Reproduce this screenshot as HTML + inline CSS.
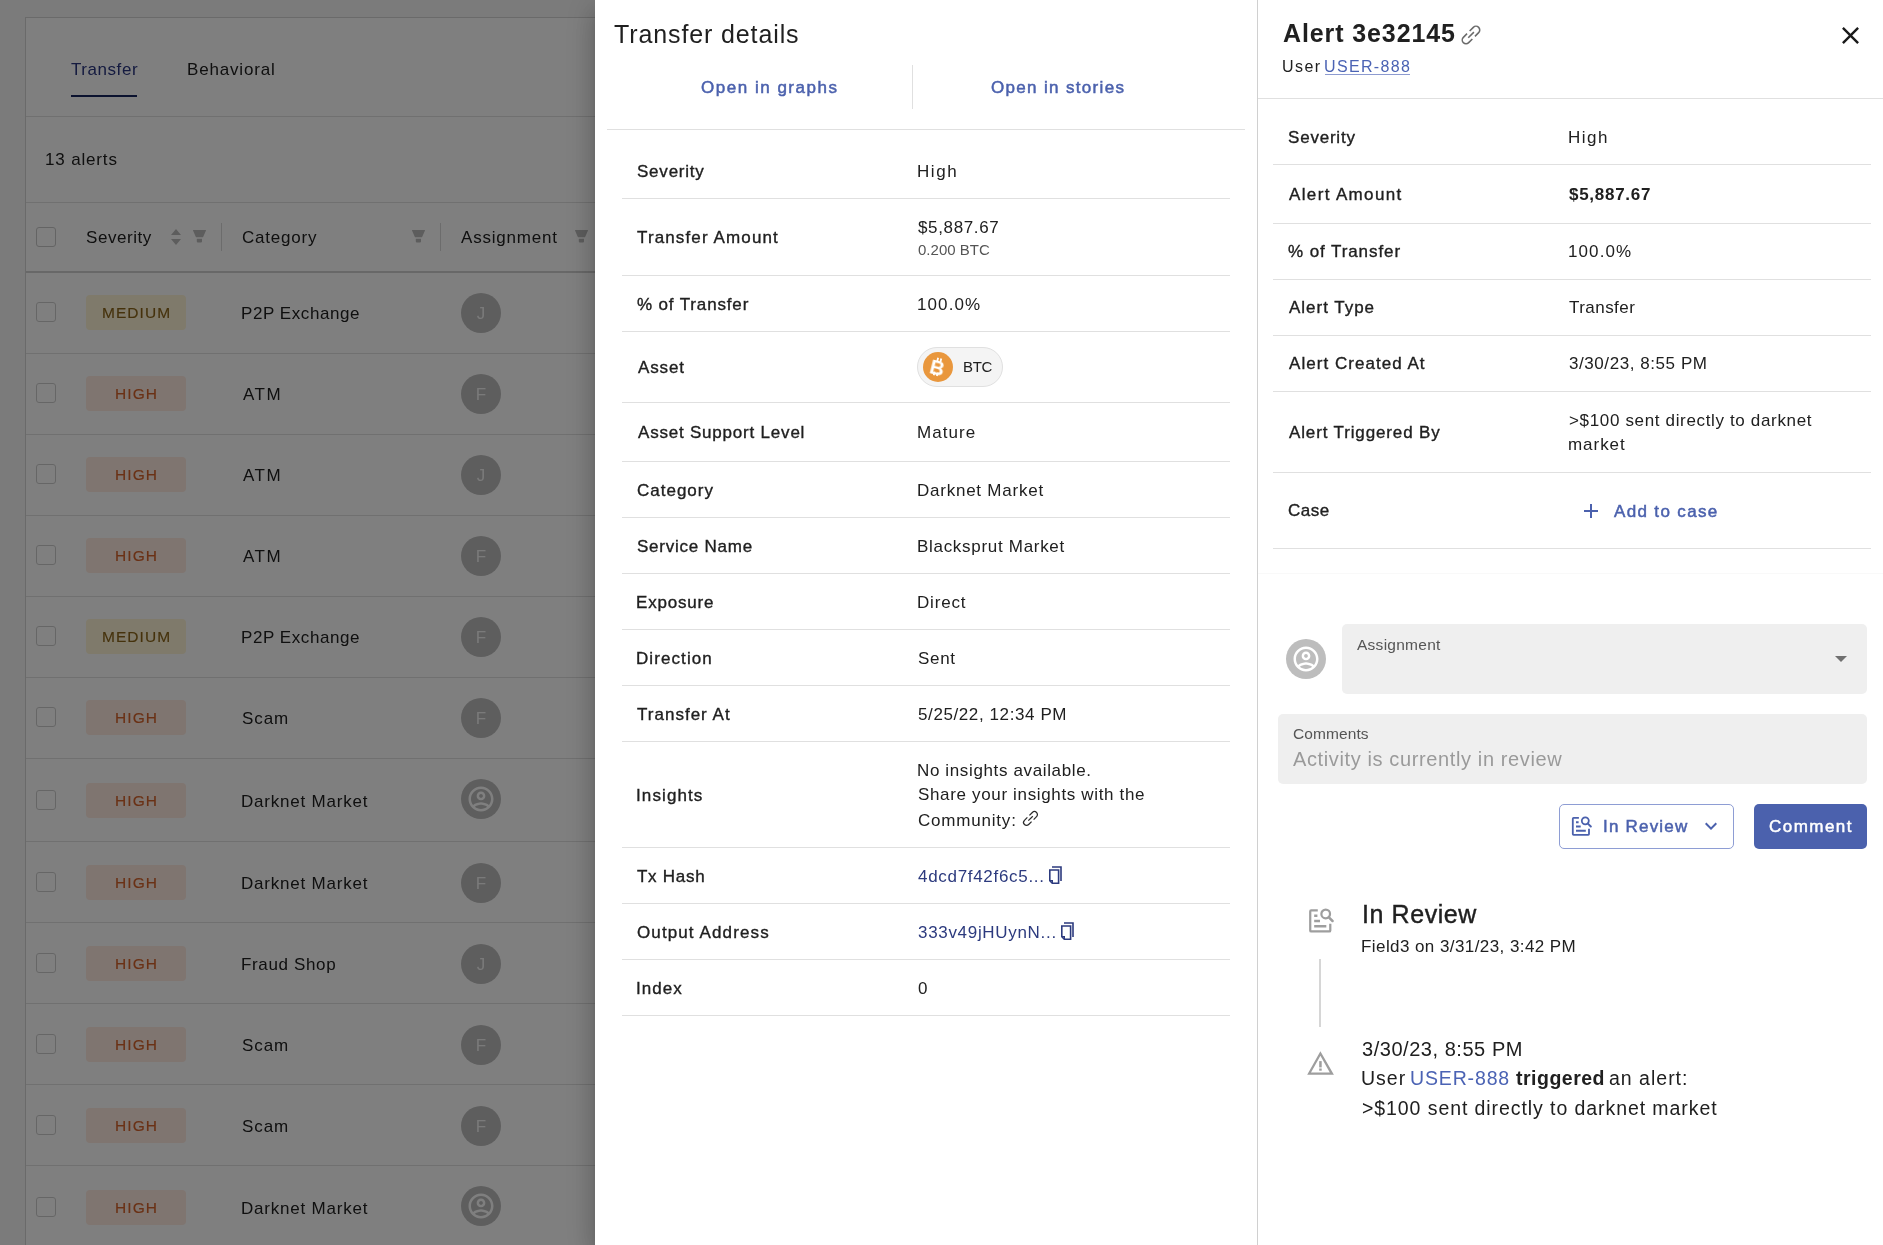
<!DOCTYPE html>
<html><head><meta charset="utf-8"><title>Alert</title>
<style>
*{box-sizing:border-box;margin:0;padding:0}
html,body{width:1883px;height:1245px;overflow:hidden;background:#fff;font-family:"Liberation Sans",sans-serif;color:#202020}
.a{position:absolute;display:block}
.t{position:absolute;white-space:nowrap;will-change:transform}
</style></head><body>
<div class="a" style="left:0px;top:0px;width:1883px;height:1245px;background:#f7f7f7"></div>
<div class="a" style="left:25px;top:17px;width:1858px;height:1240px;background:#fff;border-left:1px solid #d4d4d4;border-top:1px solid #d4d4d4"></div>
<div class="t" style="left:70.8px;top:60.61px;font-size:17px;line-height:17px;letter-spacing:0.557px;color:#2a3680;">Transfer</div>
<div class="a" style="left:71px;top:95px;width:66px;height:2px;background:#16245e"></div>
<div class="t" style="left:186.7px;top:60.61px;font-size:17px;line-height:17px;letter-spacing:0.833px;;">Behavioral</div>
<div class="a" style="left:26px;top:116px;width:1857px;height:1px;background:#e0e0e0"></div>
<div class="t" style="left:45.3px;top:151.11px;font-size:17px;line-height:17px;letter-spacing:0.838px;;">13 alerts</div>
<div class="a" style="left:26px;top:202px;width:1857px;height:1px;background:#e0e0e0"></div>
<div class="a" style="left:36px;top:227px;width:20px;height:20px;border:1.5px solid #c8c8c8;border-radius:3px;background:#fff"></div>
<div class="t" style="left:85.8px;top:228.71px;font-size:17px;line-height:17px;letter-spacing:0.557px;;">Severity</div>
<svg class="a" style="left:171px;top:229px;" width="10" height="16" viewBox="0 0 10 16"><path d="M5 0 L10 6 L0 6Z M0 10 L10 10 L5 16Z" fill="#bababa"/></svg>
<svg class="a" style="left:193px;top:230px;" width="13" height="13" viewBox="0 0 13 13"><path d="M0.3 0 H12.7 Q13.2 0 12.9 0.7 L10 7.2 H3 L0.1 0.7 Q-0.2 0 0.3 0Z M3.8 8.8 H9 V11.6 Q9 12.6 8 12.6 H4.8 Q3.8 12.6 3.8 11.6Z" fill="#bababa"/></svg>
<div class="a" style="left:221px;top:223px;width:1px;height:28px;background:#d8d8d8"></div>
<div class="t" style="left:242.1px;top:228.71px;font-size:17px;line-height:17px;letter-spacing:0.771px;;">Category</div>
<svg class="a" style="left:412px;top:230px;" width="13" height="13" viewBox="0 0 13 13"><path d="M0.3 0 H12.7 Q13.2 0 12.9 0.7 L10 7.2 H3 L0.1 0.7 Q-0.2 0 0.3 0Z M3.8 8.8 H9 V11.6 Q9 12.6 8 12.6 H4.8 Q3.8 12.6 3.8 11.6Z" fill="#bababa"/></svg>
<div class="a" style="left:440px;top:223px;width:1px;height:28px;background:#d8d8d8"></div>
<div class="t" style="left:461.4px;top:228.71px;font-size:17px;line-height:17px;letter-spacing:0.789px;;">Assignment</div>
<svg class="a" style="left:575px;top:230px;" width="13" height="13" viewBox="0 0 13 13"><path d="M0.3 0 H12.7 Q13.2 0 12.9 0.7 L10 7.2 H3 L0.1 0.7 Q-0.2 0 0.3 0Z M3.8 8.8 H9 V11.6 Q9 12.6 8 12.6 H4.8 Q3.8 12.6 3.8 11.6Z" fill="#bababa"/></svg>
<div class="a" style="left:26px;top:271px;width:1857px;height:2px;background:#d0d0d0"></div>
<div class="a" style="left:26px;top:353px;width:1857px;height:1px;background:#e0e0e0"></div>
<div class="a" style="left:26px;top:434px;width:1857px;height:1px;background:#e0e0e0"></div>
<div class="a" style="left:26px;top:515px;width:1857px;height:1px;background:#e0e0e0"></div>
<div class="a" style="left:26px;top:596px;width:1857px;height:1px;background:#e0e0e0"></div>
<div class="a" style="left:26px;top:677px;width:1857px;height:1px;background:#e0e0e0"></div>
<div class="a" style="left:26px;top:758px;width:1857px;height:1px;background:#e0e0e0"></div>
<div class="a" style="left:26px;top:841px;width:1857px;height:1px;background:#e0e0e0"></div>
<div class="a" style="left:26px;top:922px;width:1857px;height:1px;background:#e0e0e0"></div>
<div class="a" style="left:26px;top:1003px;width:1857px;height:1px;background:#e0e0e0"></div>
<div class="a" style="left:26px;top:1084px;width:1857px;height:1px;background:#e0e0e0"></div>
<div class="a" style="left:26px;top:1165px;width:1857px;height:1px;background:#e0e0e0"></div>
<div class="a" style="left:36px;top:302px;width:20px;height:20px;border:1.5px solid #cdcdcd;border-radius:3px;background:#fff"></div>
<div class="a" style="left:86px;top:295px;width:100px;height:35px;background:#fff4d6;border-radius:4px"></div>
<div class="t" style="left:101.78px;top:304.88px;font-size:15.5px;line-height:15.5px;letter-spacing:1.050px;color:#8a6418;-webkit-text-stroke:0.15px currentColor;">MEDIUM</div>
<div class="t" style="left:241.1px;top:304.61px;font-size:17px;line-height:17px;letter-spacing:0.573px;;">P2P Exchange</div>
<div class="a" style="left:461px;top:293px;width:40px;height:40px;background:#bdbdbd;border-radius:50%"></div>
<div class="t" style="left:461.2px;top:304.61px;font-size:17px;line-height:17px;width:40px;text-align:center;color:#f4f4f4">J</div>
<div class="a" style="left:36px;top:383px;width:20px;height:20px;border:1.5px solid #cdcdcd;border-radius:3px;background:#fff"></div>
<div class="a" style="left:86px;top:376px;width:100px;height:35px;background:#ffeae0;border-radius:4px"></div>
<div class="t" style="left:114.58px;top:385.88px;font-size:15.5px;line-height:15.5px;letter-spacing:1.083px;color:#d4622a;-webkit-text-stroke:0.15px currentColor;">HIGH</div>
<div class="t" style="left:242.5px;top:385.61px;font-size:17px;line-height:17px;letter-spacing:1.500px;;">ATM</div>
<div class="a" style="left:461px;top:374px;width:40px;height:40px;background:#bdbdbd;border-radius:50%"></div>
<div class="t" style="left:461.2px;top:385.61px;font-size:17px;line-height:17px;width:40px;text-align:center;color:#f4f4f4">F</div>
<div class="a" style="left:36px;top:464px;width:20px;height:20px;border:1.5px solid #cdcdcd;border-radius:3px;background:#fff"></div>
<div class="a" style="left:86px;top:457px;width:100px;height:35px;background:#ffeae0;border-radius:4px"></div>
<div class="t" style="left:114.58px;top:466.88px;font-size:15.5px;line-height:15.5px;letter-spacing:1.083px;color:#d4622a;-webkit-text-stroke:0.15px currentColor;">HIGH</div>
<div class="t" style="left:242.5px;top:466.61px;font-size:17px;line-height:17px;letter-spacing:1.500px;;">ATM</div>
<div class="a" style="left:461px;top:455px;width:40px;height:40px;background:#bdbdbd;border-radius:50%"></div>
<div class="t" style="left:461.2px;top:466.61px;font-size:17px;line-height:17px;width:40px;text-align:center;color:#f4f4f4">J</div>
<div class="a" style="left:36px;top:545px;width:20px;height:20px;border:1.5px solid #cdcdcd;border-radius:3px;background:#fff"></div>
<div class="a" style="left:86px;top:538px;width:100px;height:35px;background:#ffeae0;border-radius:4px"></div>
<div class="t" style="left:114.58px;top:547.88px;font-size:15.5px;line-height:15.5px;letter-spacing:1.083px;color:#d4622a;-webkit-text-stroke:0.15px currentColor;">HIGH</div>
<div class="t" style="left:242.5px;top:547.61px;font-size:17px;line-height:17px;letter-spacing:1.500px;;">ATM</div>
<div class="a" style="left:461px;top:536px;width:40px;height:40px;background:#bdbdbd;border-radius:50%"></div>
<div class="t" style="left:461.2px;top:547.61px;font-size:17px;line-height:17px;width:40px;text-align:center;color:#f4f4f4">F</div>
<div class="a" style="left:36px;top:626px;width:20px;height:20px;border:1.5px solid #cdcdcd;border-radius:3px;background:#fff"></div>
<div class="a" style="left:86px;top:619px;width:100px;height:35px;background:#fff4d6;border-radius:4px"></div>
<div class="t" style="left:101.78px;top:628.88px;font-size:15.5px;line-height:15.5px;letter-spacing:1.050px;color:#8a6418;-webkit-text-stroke:0.15px currentColor;">MEDIUM</div>
<div class="t" style="left:241.1px;top:628.61px;font-size:17px;line-height:17px;letter-spacing:0.573px;;">P2P Exchange</div>
<div class="a" style="left:461px;top:617px;width:40px;height:40px;background:#bdbdbd;border-radius:50%"></div>
<div class="t" style="left:461.2px;top:628.61px;font-size:17px;line-height:17px;width:40px;text-align:center;color:#f4f4f4">F</div>
<div class="a" style="left:36px;top:707px;width:20px;height:20px;border:1.5px solid #cdcdcd;border-radius:3px;background:#fff"></div>
<div class="a" style="left:86px;top:700px;width:100px;height:35px;background:#ffeae0;border-radius:4px"></div>
<div class="t" style="left:114.58px;top:709.88px;font-size:15.5px;line-height:15.5px;letter-spacing:1.083px;color:#d4622a;-webkit-text-stroke:0.15px currentColor;">HIGH</div>
<div class="t" style="left:241.7px;top:709.61px;font-size:17px;line-height:17px;letter-spacing:0.933px;;">Scam</div>
<div class="a" style="left:461px;top:698px;width:40px;height:40px;background:#bdbdbd;border-radius:50%"></div>
<div class="t" style="left:461.2px;top:709.61px;font-size:17px;line-height:17px;width:40px;text-align:center;color:#f4f4f4">F</div>
<div class="a" style="left:36px;top:790px;width:20px;height:20px;border:1.5px solid #cdcdcd;border-radius:3px;background:#fff"></div>
<div class="a" style="left:86px;top:783px;width:100px;height:35px;background:#ffeae0;border-radius:4px"></div>
<div class="t" style="left:114.58px;top:792.88px;font-size:15.5px;line-height:15.5px;letter-spacing:1.083px;color:#d4622a;-webkit-text-stroke:0.15px currentColor;">HIGH</div>
<div class="t" style="left:241.1px;top:792.61px;font-size:17px;line-height:17px;letter-spacing:0.792px;;">Darknet Market</div>
<div class="a" style="left:461px;top:779px;width:40px;height:40px;background:#bdbdbd;border-radius:50%"></div>
<svg class="a" style="left:466px;top:784px;" width="30" height="30" viewBox="0 0 24 24"><path fill="#fff" d="M12 2C6.48 2 2 6.48 2 12s4.48 10 10 10 10-4.48 10-10S17.52 2 12 2zM7.07 18.28c.43-.9 3.05-1.78 4.930-1.78s4.51.88 4.93 1.78C15.57 19.36 13.86 20 12 20s-3.57-.64-4.93-1.720zm11.29-1.45c-1.43-1.74-4.9-2.33-6.36-2.33s-4.93.59-6.36 2.33C4.62 15.49 4 13.82 4 12c0-4.41 3.59-8 8-8s8 3.590 8 8c0 1.82-.62 3.49-1.64 4.83zM12 6c-1.94 0-3.5 1.56-3.5 3.5S10.06 13 12 13s3.5-1.56 3.5-3.5S13.94 6 12 6zm0 5c-.83 0-1.5-.67-1.5-1.5S11.17 8 12 8s1.5.67 1.5 1.5S12.83 11 12 11z"/></svg>
<div class="a" style="left:36px;top:872px;width:20px;height:20px;border:1.5px solid #cdcdcd;border-radius:3px;background:#fff"></div>
<div class="a" style="left:86px;top:865px;width:100px;height:35px;background:#ffeae0;border-radius:4px"></div>
<div class="t" style="left:114.58px;top:874.88px;font-size:15.5px;line-height:15.5px;letter-spacing:1.083px;color:#d4622a;-webkit-text-stroke:0.15px currentColor;">HIGH</div>
<div class="t" style="left:241.1px;top:874.61px;font-size:17px;line-height:17px;letter-spacing:0.792px;;">Darknet Market</div>
<div class="a" style="left:461px;top:863px;width:40px;height:40px;background:#bdbdbd;border-radius:50%"></div>
<div class="t" style="left:461.2px;top:874.61px;font-size:17px;line-height:17px;width:40px;text-align:center;color:#f4f4f4">F</div>
<div class="a" style="left:36px;top:953px;width:20px;height:20px;border:1.5px solid #cdcdcd;border-radius:3px;background:#fff"></div>
<div class="a" style="left:86px;top:946px;width:100px;height:35px;background:#ffeae0;border-radius:4px"></div>
<div class="t" style="left:114.58px;top:955.88px;font-size:15.5px;line-height:15.5px;letter-spacing:1.083px;color:#d4622a;-webkit-text-stroke:0.15px currentColor;">HIGH</div>
<div class="t" style="left:241.1px;top:955.61px;font-size:17px;line-height:17px;letter-spacing:0.644px;;">Fraud Shop</div>
<div class="a" style="left:461px;top:944px;width:40px;height:40px;background:#bdbdbd;border-radius:50%"></div>
<div class="t" style="left:461.2px;top:955.61px;font-size:17px;line-height:17px;width:40px;text-align:center;color:#f4f4f4">J</div>
<div class="a" style="left:36px;top:1034px;width:20px;height:20px;border:1.5px solid #cdcdcd;border-radius:3px;background:#fff"></div>
<div class="a" style="left:86px;top:1027px;width:100px;height:35px;background:#ffeae0;border-radius:4px"></div>
<div class="t" style="left:114.58px;top:1036.88px;font-size:15.5px;line-height:15.5px;letter-spacing:1.083px;color:#d4622a;-webkit-text-stroke:0.15px currentColor;">HIGH</div>
<div class="t" style="left:241.7px;top:1036.61px;font-size:17px;line-height:17px;letter-spacing:0.933px;;">Scam</div>
<div class="a" style="left:461px;top:1025px;width:40px;height:40px;background:#bdbdbd;border-radius:50%"></div>
<div class="t" style="left:461.2px;top:1036.61px;font-size:17px;line-height:17px;width:40px;text-align:center;color:#f4f4f4">F</div>
<div class="a" style="left:36px;top:1115px;width:20px;height:20px;border:1.5px solid #cdcdcd;border-radius:3px;background:#fff"></div>
<div class="a" style="left:86px;top:1108px;width:100px;height:35px;background:#ffeae0;border-radius:4px"></div>
<div class="t" style="left:114.58px;top:1117.88px;font-size:15.5px;line-height:15.5px;letter-spacing:1.083px;color:#d4622a;-webkit-text-stroke:0.15px currentColor;">HIGH</div>
<div class="t" style="left:241.7px;top:1117.61px;font-size:17px;line-height:17px;letter-spacing:0.933px;;">Scam</div>
<div class="a" style="left:461px;top:1106px;width:40px;height:40px;background:#bdbdbd;border-radius:50%"></div>
<div class="t" style="left:461.2px;top:1117.61px;font-size:17px;line-height:17px;width:40px;text-align:center;color:#f4f4f4">F</div>
<div class="a" style="left:36px;top:1197px;width:20px;height:20px;border:1.5px solid #cdcdcd;border-radius:3px;background:#fff"></div>
<div class="a" style="left:86px;top:1190px;width:100px;height:35px;background:#ffeae0;border-radius:4px"></div>
<div class="t" style="left:114.58px;top:1199.88px;font-size:15.5px;line-height:15.5px;letter-spacing:1.083px;color:#d4622a;-webkit-text-stroke:0.15px currentColor;">HIGH</div>
<div class="t" style="left:241.1px;top:1199.61px;font-size:17px;line-height:17px;letter-spacing:0.792px;;">Darknet Market</div>
<div class="a" style="left:461px;top:1186px;width:40px;height:40px;background:#bdbdbd;border-radius:50%"></div>
<svg class="a" style="left:466px;top:1191px;" width="30" height="30" viewBox="0 0 24 24"><path fill="#fff" d="M12 2C6.48 2 2 6.48 2 12s4.48 10 10 10 10-4.48 10-10S17.52 2 12 2zM7.07 18.28c.43-.9 3.05-1.78 4.930-1.78s4.51.88 4.93 1.78C15.57 19.36 13.86 20 12 20s-3.57-.64-4.93-1.720zm11.29-1.45c-1.43-1.74-4.9-2.33-6.36-2.33s-4.93.59-6.36 2.33C4.62 15.49 4 13.82 4 12c0-4.41 3.59-8 8-8s8 3.590 8 8c0 1.82-.62 3.49-1.64 4.83zM12 6c-1.94 0-3.5 1.56-3.5 3.5S10.06 13 12 13s3.5-1.56 3.5-3.5S13.94 6 12 6zm0 5c-.83 0-1.5-.67-1.5-1.5S11.17 8 12 8s1.5.67 1.5 1.5S12.83 11 12 11z"/></svg>
<div class="a" style="left:0px;top:0px;width:1883px;height:1245px;background:rgba(0,0,0,0.5)"></div>
<div class="a" style="left:595px;top:0px;width:662px;height:1245px;background:#fff;box-shadow:0px 8px 10px -5px rgba(0,0,0,0.2),0px 16px 24px 2px rgba(0,0,0,0.14),0px 6px 30px 5px rgba(0,0,0,0.12)"></div>
<div class="t" style="left:614.3px;top:21.94px;font-size:25px;line-height:25px;letter-spacing:0.880px;color:#202020;">Transfer details</div>
<div class="t" style="left:701.35px;top:78.61px;font-size:17px;line-height:17px;letter-spacing:1.515px;color:#4b61ad;-webkit-text-stroke:0.5px currentColor;">Open in graphs</div>
<div class="a" style="left:912px;top:65px;width:1px;height:44px;background:#e0e0e0"></div>
<div class="t" style="left:991.15px;top:78.61px;font-size:17px;line-height:17px;letter-spacing:1.329px;color:#4b61ad;-webkit-text-stroke:0.5px currentColor;">Open in stories</div>
<div class="a" style="left:607px;top:129px;width:638px;height:1px;background:#e0e0e0"></div>
<div class="a" style="left:622px;top:198px;width:608px;height:1px;background:#e0e0e0"></div>
<div class="t" style="left:636.78px;top:162.81px;font-size:17px;line-height:17px;letter-spacing:0.779px;color:#202020;-webkit-text-stroke:0.35px currentColor;">Severity</div>
<div class="a" style="left:622px;top:275px;width:608px;height:1px;background:#e0e0e0"></div>
<div class="t" style="left:637.17px;top:228.81px;font-size:17px;line-height:17px;letter-spacing:1.125px;color:#202020;-webkit-text-stroke:0.35px currentColor;">Transfer Amount</div>
<div class="a" style="left:622px;top:331px;width:608px;height:1px;background:#e0e0e0"></div>
<div class="t" style="left:636.97px;top:295.81px;font-size:17px;line-height:17px;letter-spacing:0.854px;color:#202020;-webkit-text-stroke:0.35px currentColor;">% of Transfer</div>
<div class="a" style="left:622px;top:402px;width:608px;height:1px;background:#e0e0e0"></div>
<div class="t" style="left:637.57px;top:359.41px;font-size:17px;line-height:17px;letter-spacing:0.887px;color:#202020;-webkit-text-stroke:0.35px currentColor;">Asset</div>
<div class="a" style="left:622px;top:461px;width:608px;height:1px;background:#e0e0e0"></div>
<div class="t" style="left:637.57px;top:423.81px;font-size:17px;line-height:17px;letter-spacing:0.792px;color:#202020;-webkit-text-stroke:0.35px currentColor;">Asset Support Level</div>
<div class="a" style="left:622px;top:517px;width:608px;height:1px;background:#e0e0e0"></div>
<div class="t" style="left:636.78px;top:481.81px;font-size:17px;line-height:17px;letter-spacing:0.993px;color:#202020;-webkit-text-stroke:0.35px currentColor;">Category</div>
<div class="a" style="left:622px;top:573px;width:608px;height:1px;background:#e0e0e0"></div>
<div class="t" style="left:636.78px;top:537.81px;font-size:17px;line-height:17px;letter-spacing:0.768px;color:#202020;-webkit-text-stroke:0.35px currentColor;">Service Name</div>
<div class="a" style="left:622px;top:629px;width:608px;height:1px;background:#e0e0e0"></div>
<div class="t" style="left:636.17px;top:593.81px;font-size:17px;line-height:17px;letter-spacing:0.807px;color:#202020;-webkit-text-stroke:0.35px currentColor;">Exposure</div>
<div class="a" style="left:622px;top:685px;width:608px;height:1px;background:#e0e0e0"></div>
<div class="t" style="left:636.17px;top:649.81px;font-size:17px;line-height:17px;letter-spacing:1.081px;color:#202020;-webkit-text-stroke:0.35px currentColor;">Direction</div>
<div class="a" style="left:622px;top:741px;width:608px;height:1px;background:#e0e0e0"></div>
<div class="t" style="left:637.17px;top:705.81px;font-size:17px;line-height:17px;letter-spacing:1.015px;color:#202020;-webkit-text-stroke:0.35px currentColor;">Transfer At</div>
<div class="a" style="left:622px;top:847px;width:608px;height:1px;background:#e0e0e0"></div>
<div class="t" style="left:636.07px;top:786.81px;font-size:17px;line-height:17px;letter-spacing:1.107px;color:#202020;-webkit-text-stroke:0.35px currentColor;">Insights</div>
<div class="a" style="left:622px;top:903px;width:608px;height:1px;background:#e0e0e0"></div>
<div class="t" style="left:637.17px;top:867.81px;font-size:17px;line-height:17px;letter-spacing:0.725px;color:#202020;-webkit-text-stroke:0.35px currentColor;">Tx Hash</div>
<div class="a" style="left:622px;top:959px;width:608px;height:1px;background:#e0e0e0"></div>
<div class="t" style="left:636.78px;top:923.81px;font-size:17px;line-height:17px;letter-spacing:1.112px;color:#202020;-webkit-text-stroke:0.35px currentColor;">Output Address</div>
<div class="a" style="left:622px;top:1015px;width:608px;height:1px;background:#e0e0e0"></div>
<div class="t" style="left:636.07px;top:979.81px;font-size:17px;line-height:17px;letter-spacing:1.012px;color:#202020;-webkit-text-stroke:0.35px currentColor;">Index</div>
<div class="t" style="left:917.0px;top:162.81px;font-size:17px;line-height:17px;letter-spacing:1.567px;color:#202020;;">High</div>
<div class="t" style="left:918.2px;top:218.61px;font-size:17px;line-height:17px;letter-spacing:0.638px;color:#202020;">$5,887.67</div>
<div class="t" style="left:917.6px;top:242.10px;font-size:15px;line-height:15px;letter-spacing:0.012px;color:#555;">0.200 BTC</div>
<div class="t" style="left:917.1px;top:295.81px;font-size:17px;line-height:17px;letter-spacing:1.100px;color:#202020;;">100.0%</div>
<div class="a" style="left:917px;top:347px;width:86px;height:40px;background:#f4f4f4;border:1px solid #e0e0e0;border-radius:20px"></div>
<div class="a" style="left:923px;top:352px;width:30px;height:30px;background:#e9973d;border-radius:50%"></div>
<svg class="a" style="left:923px;top:352px;" width="30" height="30" viewBox="0 0 30 30"><g transform="rotate(14 15 15)" fill="#fff"><rect x="12" y="6" width="1.8" height="3.5"/><rect x="15.2" y="6" width="1.8" height="3.5"/><rect x="12" y="20.5" width="1.8" height="3.5"/><rect x="15.2" y="20.5" width="1.8" height="3.5"/></g></svg>
<div class="t" style="left:930px;top:357.57px;font-size:20px;line-height:20px;color:#fff;font-weight:bold;transform:rotate(14deg);transform-origin:8px 10px">B</div>
<div class="t" style="left:962.7px;top:359.20px;font-size:15px;line-height:15px;letter-spacing:-0.350px;color:#202020;">BTC</div>
<div class="t" style="left:917.0px;top:423.81px;font-size:17px;line-height:17px;letter-spacing:1.040px;color:#202020;;">Mature</div>
<div class="t" style="left:917.0px;top:481.81px;font-size:17px;line-height:17px;letter-spacing:0.762px;color:#202020;;">Darknet Market</div>
<div class="t" style="left:917.0px;top:537.81px;font-size:17px;line-height:17px;letter-spacing:0.700px;color:#202020;;">Blacksprut Market</div>
<div class="t" style="left:917.0px;top:593.81px;font-size:17px;line-height:17px;letter-spacing:0.820px;color:#202020;;">Direct</div>
<div class="t" style="left:917.6px;top:649.81px;font-size:17px;line-height:17px;letter-spacing:0.667px;color:#202020;;">Sent</div>
<div class="t" style="left:917.7px;top:705.81px;font-size:17px;line-height:17px;letter-spacing:0.600px;color:#202020;;">5/25/22, 12:34 PM</div>
<div class="t" style="left:917.0px;top:761.71px;font-size:17px;line-height:17px;letter-spacing:0.633px;color:#202020;">No insights available.</div>
<div class="t" style="left:917.6px;top:786.21px;font-size:17px;line-height:17px;letter-spacing:0.656px;color:#202020;">Share your insights with the</div>
<div class="t" style="left:917.6px;top:811.51px;font-size:17px;line-height:17px;letter-spacing:0.800px;color:#202020;">Community:</div>
<div class="t" style="left:918.0px;top:867.81px;font-size:17px;line-height:17px;letter-spacing:0.693px;color:#202020;color:#2c3a7e;">4dcd7f42f6c5...</div>
<div class="t" style="left:917.8px;top:923.81px;font-size:17px;line-height:17px;letter-spacing:0.686px;color:#202020;color:#2c3a7e;">333v49jHUynN...</div>
<div class="t" style="left:917.8px;top:979.81px;font-size:17px;line-height:17px;letter-spacing:0.000px;color:#202020;;">0</div>
<svg class="a" style="left:1048px;top:866px;" width="14" height="18" viewBox="0 0 14 18"><g fill="none" stroke="#2c3a7e" stroke-width="1.6"><path d="M4 1 H13 V15"/><path d="M2 4 H10.6 V17.4 H4.5 L1.8 14.7 V4Z"/><path d="M2 14.6 H4.4 V17" stroke-width="1.2"/></g></svg>
<svg class="a" style="left:1060px;top:921.5px;" width="14" height="18" viewBox="0 0 14 18"><g fill="none" stroke="#2c3a7e" stroke-width="1.6"><path d="M4 1 H13 V15"/><path d="M2 4 H10.6 V17.4 H4.5 L1.8 14.7 V4Z"/><path d="M2 14.6 H4.4 V17" stroke-width="1.2"/></g></svg>
<svg class="a" style="left:1021.1px;top:809px;" width="19" height="19" viewBox="0 0 24 24"><g fill="none" stroke="#2a2a2a" stroke-width="1.55" transform="rotate(-45 12 12)"><path d="M13.84 8.25 H19.05 A3.75 3.75 0 0 1 19.05 15.75 H13.84"/><path d="M10.16 15.75 H4.95 A3.75 3.75 0 0 1 4.95 8.25 H10.16"/><path d="M8.1 12 H16.1"/></g></svg>
<div class="a" style="left:1257px;top:0px;width:626px;height:1245px;background:#fff;border-left:1px solid #d0d0d0"></div>
<div class="t" style="left:1282.6px;top:20.64px;font-size:25px;line-height:25px;letter-spacing:0.892px;font-weight:bold;color:#202020;">Alert 3e32145</div>
<svg class="a" style="left:1459.4px;top:23.1px;" width="24" height="24" viewBox="0 0 24 24"><g fill="none" stroke="#6b6b6b" stroke-width="1.55" transform="rotate(-45 12 12)"><path d="M13.84 8.25 H19.05 A3.75 3.75 0 0 1 19.05 15.75 H13.84"/><path d="M10.16 15.75 H4.95 A3.75 3.75 0 0 1 4.95 8.25 H10.16"/><path d="M8.1 12 H16.1"/></g></svg>
<svg class="a" style="left:1836px;top:21px;" width="29" height="29" viewBox="0 0 24 24"><path fill="#1a1a1a" d="M19 6.41L17.59 5 12 10.59 6.41 5 5 6.41 10.59 12 5 17.59 6.41 19 12 13.41 17.59 19 19 17.59 13.41 12z"/></svg>
<div class="t" style="left:1282.1px;top:58.96px;font-size:16px;line-height:16px;letter-spacing:1.433px;color:#202020;">User</div>
<div class="t" style="left:1324.3px;top:58.96px;font-size:16px;line-height:16px;letter-spacing:1.343px;color:#4b63b4;">USER-888</div>
<div class="a" style="left:1325px;top:73.5px;width:85px;height:1px;background:#8d9bd0"></div>
<div class="a" style="left:1258px;top:98px;width:625px;height:1px;background:#e0e0e0"></div>
<div class="a" style="left:1273px;top:164px;width:598px;height:1px;background:#e0e0e0"></div>
<div class="t" style="left:1287.88px;top:129.11px;font-size:17px;line-height:17px;letter-spacing:0.793px;color:#202020;-webkit-text-stroke:0.35px currentColor;">Severity</div>
<div class="a" style="left:1273px;top:223px;width:598px;height:1px;background:#e0e0e0"></div>
<div class="t" style="left:1288.68px;top:185.61px;font-size:17px;line-height:17px;letter-spacing:1.359px;color:#202020;-webkit-text-stroke:0.35px currentColor;">Alert Amount</div>
<div class="a" style="left:1273px;top:279px;width:598px;height:1px;background:#e0e0e0"></div>
<div class="t" style="left:1288.08px;top:243.11px;font-size:17px;line-height:17px;letter-spacing:0.912px;color:#202020;-webkit-text-stroke:0.35px currentColor;">% of Transfer</div>
<div class="a" style="left:1273px;top:335px;width:598px;height:1px;background:#e0e0e0"></div>
<div class="t" style="left:1288.68px;top:299.11px;font-size:17px;line-height:17px;letter-spacing:0.983px;color:#202020;-webkit-text-stroke:0.35px currentColor;">Alert Type</div>
<div class="a" style="left:1273px;top:391px;width:598px;height:1px;background:#e0e0e0"></div>
<div class="t" style="left:1288.68px;top:355.11px;font-size:17px;line-height:17px;letter-spacing:1.037px;color:#202020;-webkit-text-stroke:0.35px currentColor;">Alert Created At</div>
<div class="a" style="left:1273px;top:472px;width:598px;height:1px;background:#e0e0e0"></div>
<div class="t" style="left:1288.68px;top:423.61px;font-size:17px;line-height:17px;letter-spacing:0.868px;color:#202020;-webkit-text-stroke:0.35px currentColor;">Alert Triggered By</div>
<div class="a" style="left:1273px;top:548px;width:598px;height:1px;background:#e0e0e0"></div>
<div class="t" style="left:1287.88px;top:502.11px;font-size:17px;line-height:17px;letter-spacing:0.517px;color:#202020;-webkit-text-stroke:0.35px currentColor;">Case</div>
<div class="t" style="left:1568.1px;top:129.11px;font-size:17px;line-height:17px;letter-spacing:1.533px;color:#202020;;">High</div>
<div class="t" style="left:1569.3px;top:185.61px;font-size:17px;line-height:17px;letter-spacing:0.725px;font-weight:bold;color:#202020;;">$5,887.67</div>
<div class="t" style="left:1568.2px;top:243.11px;font-size:17px;line-height:17px;letter-spacing:1.100px;color:#202020;;">100.0%</div>
<div class="t" style="left:1569.1px;top:299.11px;font-size:17px;line-height:17px;letter-spacing:0.457px;color:#202020;;">Transfer</div>
<div class="t" style="left:1568.9px;top:355.11px;font-size:17px;line-height:17px;letter-spacing:0.567px;color:#202020;;">3/30/23, 8:55 PM</div>
<div class="t" style="left:1568.7px;top:411.81px;font-size:17px;line-height:17px;letter-spacing:0.655px;color:#202020;">&gt;$100 sent directly to darknet</div>
<div class="t" style="left:1568.4px;top:436.21px;font-size:17px;line-height:17px;letter-spacing:0.960px;color:#202020;">market</div>
<svg class="a" style="left:1578.5px;top:498.5px;width:24px;height:24px" width="24" height="24" viewBox="0 0 24 24"><path fill="#4b61ad" d="M19 13h-6v6h-2v-6H5v-2h6V5h2v6h6v2z"/></svg>
<div class="t" style="left:1613.85px;top:502.81px;font-size:17px;line-height:17px;letter-spacing:1.350px;color:#4b61ad;-webkit-text-stroke:0.5px currentColor;">Add to case</div>
<div class="a" style="left:1258px;top:573px;width:625px;height:1px;background:#f9f9f9;border-top-left-radius:4px"></div>
<div class="a" style="left:1286px;top:639px;width:40px;height:40px;background:#bdbdbd;border-radius:50%"></div>
<svg class="a" style="left:1291px;top:644px;" width="30" height="30" viewBox="0 0 24 24"><path fill="#fff" d="M12 2C6.48 2 2 6.48 2 12s4.48 10 10 10 10-4.48 10-10S17.52 2 12 2zM7.07 18.28c.43-.9 3.05-1.78 4.930-1.78s4.51.88 4.93 1.78C15.57 19.36 13.86 20 12 20s-3.57-.64-4.93-1.720zm11.29-1.45c-1.43-1.74-4.9-2.33-6.36-2.33s-4.93.59-6.36 2.33C4.62 15.49 4 13.82 4 12c0-4.41 3.59-8 8-8s8 3.590 8 8c0 1.82-.62 3.49-1.64 4.83zM12 6c-1.94 0-3.5 1.56-3.5 3.5S10.06 13 12 13s3.5-1.56 3.5-3.5S13.94 6 12 6zm0 5c-.83 0-1.5-.67-1.5-1.5S11.17 8 12 8s1.5.67 1.5 1.5S12.83 11 12 11z"/></svg>
<div class="a" style="left:1342px;top:624px;width:525px;height:70px;background:#efefef;border-radius:5px"></div>
<div class="t" style="left:1357.4px;top:636.68px;font-size:15.5px;line-height:15.5px;letter-spacing:0.267px;color:#555;">Assignment</div>
<svg class="a" style="left:1835px;top:656px;" width="12" height="6" viewBox="0 0 12 6"><path d="M0 0H12L6 6Z" fill="#707070"/></svg>
<div class="a" style="left:1278px;top:714px;width:589px;height:70px;background:#efefef;border-radius:5px"></div>
<div class="t" style="left:1292.6px;top:725.88px;font-size:15.5px;line-height:15.5px;letter-spacing:0.086px;color:#555;">Comments</div>
<div class="t" style="left:1293.4px;top:748.97px;font-size:20px;line-height:20px;letter-spacing:0.623px;color:#9a9a9a;">Activity is currently in review</div>
<div class="a" style="left:1559px;top:804px;width:175px;height:45px;border:1px solid #8e9dd4;border-radius:5px;background:#fff"></div>
<svg class="a" style="left:1571px;top:816px;" width="21" height="21" viewBox="0 0 21 21"><g fill="none" stroke="#4b61ad" stroke-width="1.8" stroke-linecap="butt"><path d="M7.9 1.95 H2.6 Q1.8 1.95 1.8 2.8 V18.1 Q1.8 18.95 2.6 18.95 H17.2 Q18 18.95 18 18.1 V12.8"/><path d="M5 6.35 H7.6 M5 10.45 H9.7 M5 14.7 H14.8" stroke-width="2"/><circle cx="14.3" cy="4.8" r="3.5"/><path d="M16.9 7.6 L19.8 10.5" stroke-width="2" stroke-linecap="round"/></g></svg>
<div class="t" style="left:1603.05px;top:818.31px;font-size:17px;line-height:17px;letter-spacing:1.200px;color:#4b61ad;-webkit-text-stroke:0.5px currentColor;">In Review</div>
<svg class="a" style="left:1699px;top:814px;" width="24" height="24" viewBox="0 0 24 24"><path fill="#4b61ad" d="M16.59 8.59L12 13.17 7.41 8.59 6 10l6 6 6-6z"/></svg>
<div class="a" style="left:1754px;top:804px;width:113px;height:45px;background:#4b61ad;border-radius:5px"></div>
<div class="t" style="left:1768.95px;top:818.31px;font-size:17px;line-height:17px;letter-spacing:1.467px;color:#fff;-webkit-text-stroke:0.5px currentColor;">Comment</div>
<svg class="a" style="left:1308px;top:908px;" width="26" height="26" viewBox="0 0 21 21"><g fill="none" stroke="#9e9e9e" stroke-width="1.8" stroke-linecap="butt"><path d="M7.9 1.95 H2.6 Q1.8 1.95 1.8 2.8 V18.1 Q1.8 18.95 2.6 18.95 H17.2 Q18 18.95 18 18.1 V12.8"/><path d="M5 6.35 H7.6 M5 10.45 H9.7 M5 14.7 H14.8" stroke-width="2"/><circle cx="14.3" cy="4.8" r="3.5"/><path d="M16.9 7.6 L19.8 10.5" stroke-width="2" stroke-linecap="round"/></g></svg>
<div class="t" style="left:1361.9px;top:901.84px;font-size:25px;line-height:25px;letter-spacing:0.575px;color:#202020;-webkit-text-stroke:0.4px currentColor;">In Review</div>
<div class="t" style="left:1361.1px;top:938.31px;font-size:17px;line-height:17px;letter-spacing:0.424px;color:#202020;">Field3 on 3/31/23, 3:42 PM</div>
<div class="a" style="left:1319px;top:959px;width:2px;height:68px;background:#d6d6d6"></div>
<svg class="a" style="left:1306px;top:1048px;" width="30" height="30" viewBox="0 0 30 30"><path fill="#9e9e9e" fill-rule="evenodd" d="M14.4 3.2 L27.9 26.7 H1.2 Z M14.4 7.86 L5 24.4 H23.8 Z"/><rect x="13.2" y="13.1" width="2.5" height="6.3" fill="#9e9e9e"/><rect x="13.2" y="20.5" width="2.5" height="2.2" fill="#9e9e9e"/></svg>
<div class="t" style="left:1361.8px;top:1039.07px;font-size:20px;line-height:20px;letter-spacing:0.540px;color:#202020;">3/30/23, 8:55 PM</div>
<div class="t" style="left:1361.0px;top:1069.49px;font-size:19.5px;line-height:19.5px;letter-spacing:1.000px;color:#202020;">User</div>
<div class="t" style="left:1409.8px;top:1069.49px;font-size:19.5px;line-height:19.5px;letter-spacing:0.857px;color:#4b63b4;">USER-888</div>
<div class="t" style="left:1515.7px;top:1069.49px;font-size:19.5px;line-height:19.5px;letter-spacing:0.500px;font-weight:bold;color:#202020;">triggered</div>
<div class="t" style="left:1609.4px;top:1069.49px;font-size:19.5px;line-height:19.5px;letter-spacing:1.000px;color:#202020;">an alert:</div>
<div class="t" style="left:1361.6px;top:1099.49px;font-size:19.5px;line-height:19.5px;letter-spacing:0.922px;color:#202020;">&gt;$100 sent directly to darknet market</div>
</body></html>
